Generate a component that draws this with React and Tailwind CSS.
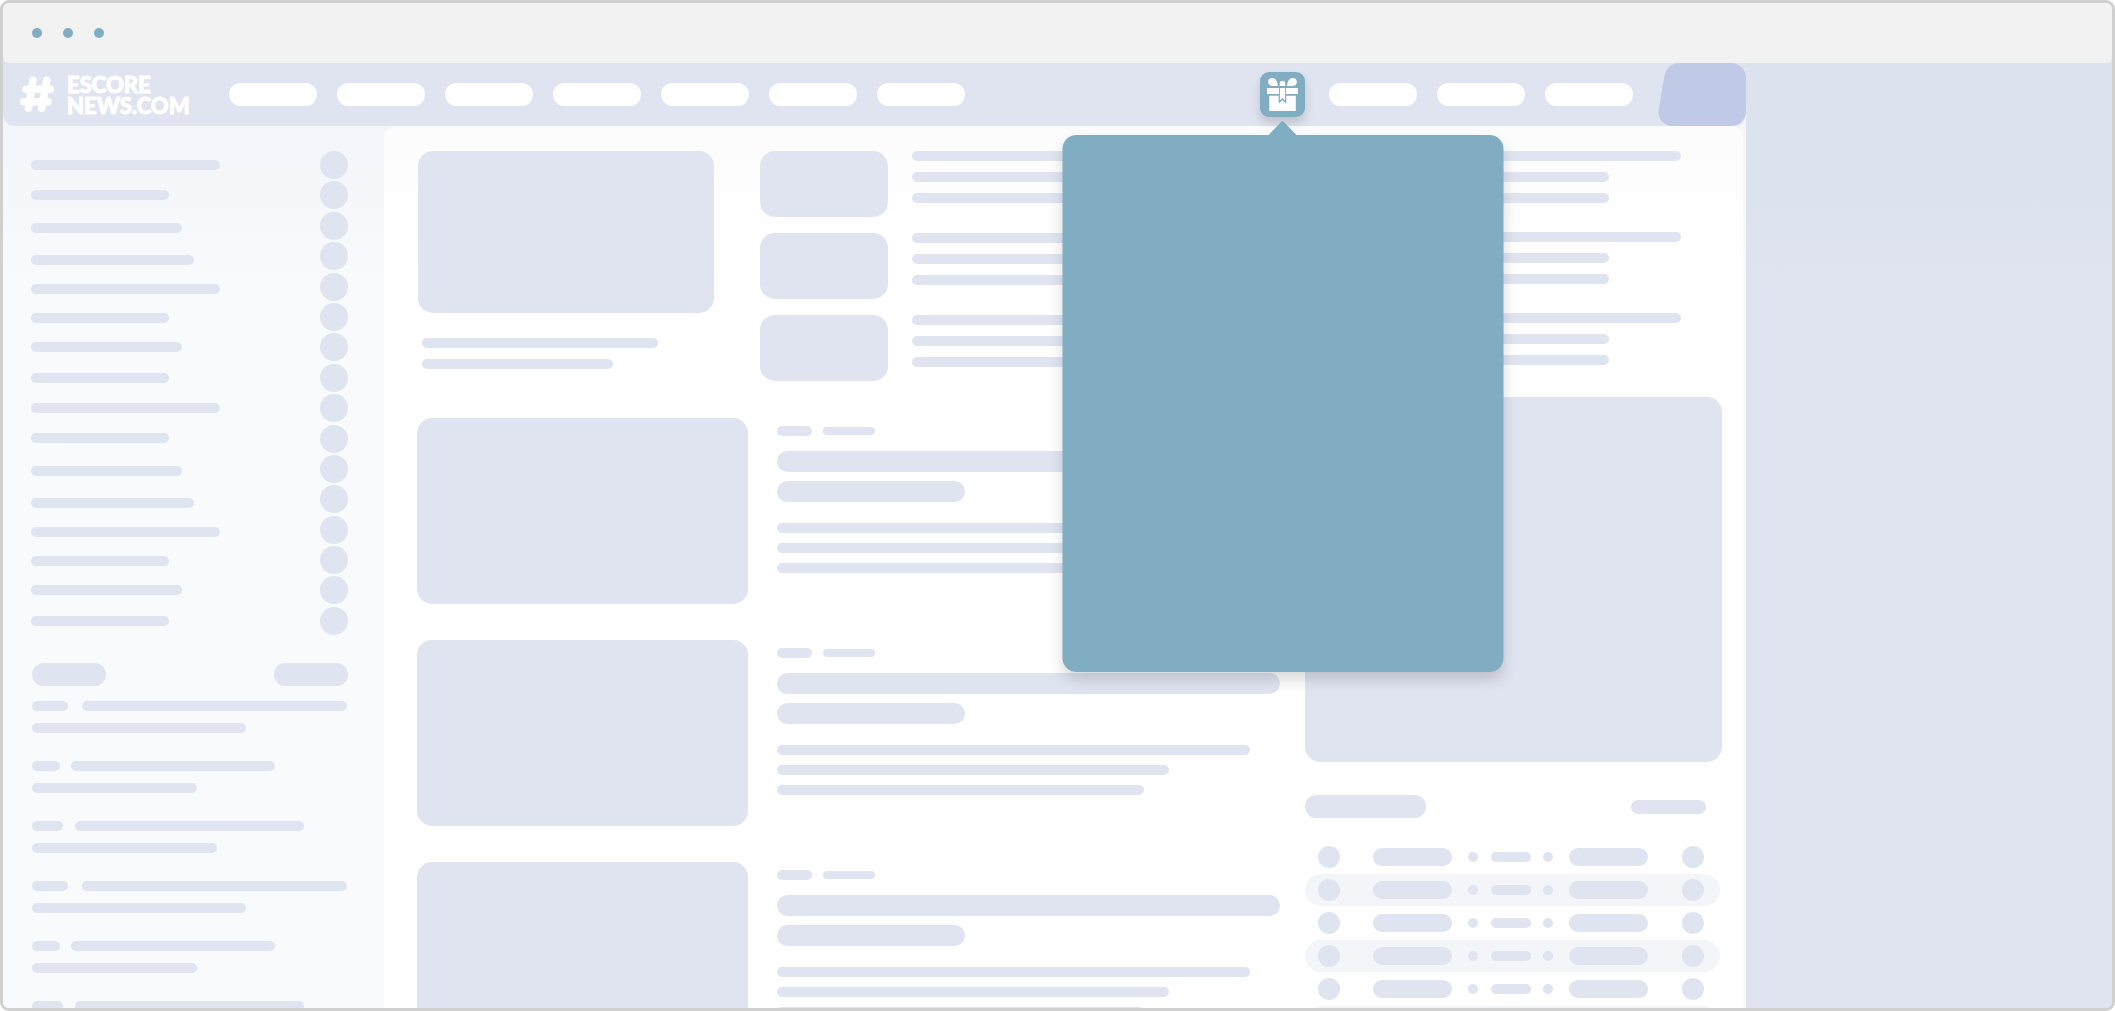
import React from "react";

const tone = "bg-[#e0e4f1]";

function Bar({ className = "" }) {
  return <div className={`h-[10px] shrink-0 rounded-full ${tone} ${className}`} />;
}

function HashIcon() {
  return (
    <svg width="35" height="37" viewBox="0 0 35 37" fill="none" stroke="#fff" strokeWidth="7.5" strokeLinecap="round" aria-hidden="true">
      <path d="M13 4.2 8.4 32.2M26.8 4.2 21.8 32.2M6 13.3H30.4M3.9 25.8H28" />
    </svg>
  );
}

function GiftIcon() {
  return (
    <svg className="size-full" viewBox="0 0 45 45" aria-hidden="true">
      <g fill="#fff">
        <path d="M8.2 10.2C8 7.400 10 6 12.300 6.100C15.500 6.300 17.600 9 17.800 13.900H12.500C9.800 13.900 8.300 12.400 8.200 10.200Z" />
        <path d="M36.800 10.200C37 7.400 35 6 32.700 6.100C29.500 6.300 27.400 9 27.200 13.900H32.500C35.200 13.900 36.700 12.400 36.800 10.200Z" />
        <path d="M19.700 14V11.400C19.700 9.800 20.900 8.700 22.500 8.700S25.300 9.800 25.300 11.400V14Z" />
        <path d="M7 16H19V22H7ZM26 16H38V22H26Z" />
        <path d="M9.300 23.700H18.700V31.600L22.500 28.200L26.300 31.600V23.700H35.800V39H9.300Z" />
        <path d="M19.900 16H25.100V28.500L22.500 26L19.900 28.500Z" />
      </g>
    </svg>
  );
}

function NavPills({ items }) {
  return items.map((name) => (
    <a key={name} href="#" aria-label={name} className="h-[23px] w-[88px] rounded-full bg-white" />
  ));
}

function Header() {
  return (
    <header className="flex h-[63px] items-center rounded-b-xl bg-[#e0e4f1] pl-[17px]">
      <a href="#" className="flex items-center gap-3 text-white">
        <HashIcon />
        <span className="w-[124px] font-['Lato',sans-serif] text-[22px] leading-[21px] font-black [-webkit-text-stroke:1px_white] [stroke-linejoin:round]">
          ESCORE
          <br />
          NEWS.COM
        </span>
      </a>
      <nav aria-label="Sections" className="ml-[38px] flex gap-5">
        <NavPills items={["News", "Matches", "Teams", "Players", "Events", "Ranking", "Articles"]} />
      </nav>
      <div className="relative ml-auto h-[45px]">
        <button type="button" aria-label="Gifts" className="block size-[45px] rounded-[9px] bg-[#80adc2] shadow-[0_6px_10px_rgba(0,0,0,0.15)]">
          <GiftIcon />
        </button>
        <GiftPopover />
      </div>
      <nav aria-label="Account" className="ml-6 flex gap-5">
        <NavPills items={["Language", "Search", "Settings"]} />
      </nav>
      <button type="button" aria-label="Sign in" className="ml-[25px] h-[63px] w-[88px]">
        <svg className="size-full" viewBox="0 0 88 63" preserveAspectRatio="none" aria-hidden="true">
          <path d="M21 0H73C81.500 0 88 6.500 88 15V48C88 56.500 81.500 63 73 63H15C6 63 -0.600 56 0.500 47.500L6.500 13C8 5 13.500 0 21 0Z" fill="#c0c9e5" />
        </svg>
      </button>
    </header>
  );
}

function GiftPopover() {
  return (
    <div role="dialog" aria-label="Gifts" className="absolute top-[63px] left-1/2 z-10 h-[537px] w-[441px] -translate-x-1/2 rounded-[14px] bg-[#80adc2] shadow-[0_8px_14px_rgba(0,0,0,0.15)]">
      <svg className="absolute bottom-full left-1/2 -translate-x-1/2" width="28" height="14" viewBox="0 0 28 14" aria-hidden="true">
        <path d="M0 14 12.600 1Q14 -0.300 15.400 1L28 14Z" fill="#80adc2" />
      </svg>
    </div>
  );
}

const rankBars = [
  "w-[189px]",
  "mt-5 w-[138px]",
  "mt-[23px] w-[151px]",
  "mt-[22px] w-[163px]",
  "mt-[19px] w-[189px]",
  "mt-[19px] w-[138px]",
  "mt-[19px] w-[151px]",
  "mt-[21px] w-[138px]",
  "mt-5 w-[189px]",
  "mt-5 w-[138px]",
  "mt-[23px] w-[151px]",
  "mt-[22px] w-[163px]",
  "mt-[19px] w-[189px]",
  "mt-[19px] w-[138px]",
  "mt-[19px] w-[151px]",
  "mt-[21px] w-[138px]",
];

const feed = [
  { gap: "gap-[14px]", tag: "w-9", line: "w-[265px]", second: "w-[214px]" },
  { gap: "gap-[11px]", tag: "w-7", line: "w-[204px]", second: "w-[165px]" },
  { gap: "gap-3", tag: "w-[31px]", line: "w-[229px]", second: "w-[185px]" },
];

function Sidebar() {
  return (
    <aside className="w-[381px] shrink-0 pt-[25px] pr-9 pl-7">
      <div className="flex justify-between">
        <div className="flex flex-col pt-[9px]">
          {rankBars.map((c, i) => (
            <Bar key={i} className={c} />
          ))}
        </div>
        <div className="flex h-[484px] flex-col justify-between">
          {rankBars.map((_, i) => (
            <div key={i} className={`size-7 rounded-full ${tone}`} />
          ))}
        </div>
      </div>
      <div className="mt-7 flex justify-between pl-px">
        <div className={`h-[23px] w-[74px] rounded-full ${tone}`} />
        <div className={`h-[23px] w-[74px] rounded-full ${tone}`} />
      </div>
      <div className="mt-[15px] flex flex-col gap-7 pl-px">
        {[...feed, ...feed].map((f, i) => (
          <div key={i} className="flex flex-col gap-3">
            <div className={`flex ${f.gap}`}>
              <Bar className={f.tag} />
              <Bar className={f.line} />
            </div>
            <Bar className={f.second} />
          </div>
        ))}
      </div>
    </aside>
  );
}

function Featured() {
  return (
    <section className="flex">
      <div className="w-[297px] shrink-0 pl-px">
        <div className={`h-[162px] rounded-[15px] ${tone}`} />
        <Bar className="mt-[25px] ml-1 w-[236px]" />
        <Bar className="mt-[11px] ml-1 w-[191px]" />
      </div>
      <div className="ml-[46px] flex flex-1 flex-col gap-4">
        {[0, 1, 2].map((i) => (
          <div key={i} className="flex gap-6">
            <div className={`h-[66px] w-32 shrink-0 rounded-[15px] ${tone}`} />
            <div className="flex flex-1 flex-col gap-[11px]">
              <Bar className="w-11/12" />
              <Bar className="w-3/4" />
              <Bar className="w-3/4" />
            </div>
          </div>
        ))}
      </div>
    </section>
  );
}

function Article() {
  return (
    <article className="flex gap-[29px]">
      <div className={`h-[186px] w-[331px] shrink-0 rounded-[15px] ${tone}`} />
      <div className="flex-1 pt-2">
        <div className="flex items-center gap-[11px]">
          <Bar className="w-[35px]" />
          <div className={`h-2 w-[52px] rounded-full ${tone}`} />
        </div>
        <div className={`mt-[15px] h-[21px] rounded-full ${tone}`} />
        <div className={`mt-[9px] h-[21px] w-[188px] rounded-full ${tone}`} />
        <div className="mt-[21px] flex flex-col gap-[10px]">
          <Bar className="w-[94%]" />
          <Bar className="w-[78%]" />
          <Bar className="w-[73%]" />
        </div>
      </div>
    </article>
  );
}

function MatchRow({ striped }) {
  return (
    <div className={`mr-[2px] flex h-8 items-center rounded-full pr-4 pl-[13px] ${striped ? "bg-[#f4f5f9]" : ""}`}>
      <div className={`size-[22px] rounded-full ${tone}`} />
      <div className={`ml-[33px] h-[18px] w-[79px] rounded-full ${tone}`} />
      <Bar className="ml-4 w-[10px]" />
      <Bar className="ml-[13px] w-10" />
      <Bar className="ml-3 w-[10px]" />
      <div className={`ml-4 h-[18px] w-[79px] rounded-full ${tone}`} />
      <div className={`ml-auto size-[22px] rounded-full ${tone}`} />
    </div>
  );
}

function RightColumn() {
  return (
    <div className="w-[417px] shrink-0">
      <div className="flex flex-col gap-[29px]">
        {[0, 1, 2].map((i) => (
          <div key={i} className="flex flex-col gap-[11px]">
            <Bar className="w-[376px]" />
            <Bar className="w-[304px]" />
            <Bar className="w-[304px]" />
          </div>
        ))}
      </div>
      <div className={`mt-8 h-[365px] rounded-[15px] ${tone}`} />
      <div className="mt-[33px] flex items-center justify-between pr-4">
        <div className={`h-[23px] w-[121px] rounded-full ${tone}`} />
        <div className={`h-[14px] w-[75px] rounded-full ${tone}`} />
      </div>
      <div className="mt-[23px] flex flex-col gap-px">
        {[0, 1, 2, 3, 4, 5].map((i) => (
          <MatchRow key={i} striped={i % 2 === 1} />
        ))}
      </div>
    </div>
  );
}

export default function App() {
  return (
    <div className="flex h-screen flex-col overflow-hidden rounded-[9px] border-[3px] border-[#d0d0d0] bg-[#e0e4f1]">
      <div className="flex h-[60px] shrink-0 items-center gap-[21px] rounded-b-md bg-[#f2f2f2] pl-[29px]">
        <span className="size-[10px] rounded-full bg-[#80adc2]" />
        <span className="size-[10px] rounded-full bg-[#80adc2]" />
        <span className="size-[10px] rounded-full bg-[#80adc2]" />
      </div>
      <div className="flex min-h-0 flex-1">
        <div className="min-w-0 flex-1 bg-[#f8fafc] bg-[linear-gradient(to_bottom,#f4f5fa_60px,#f8fafc_220px)]">
          <Header />
          <div className="flex pr-[3px]">
            <Sidebar />
            <main className="flex min-w-0 flex-1 gap-[25px] rounded-t-xl bg-[linear-gradient(to_bottom,#fcfcfc,#ffffff_150px)] pt-[25px] pr-[21px] pl-[33px]">
              <div className="min-w-0 flex-1">
                <Featured />
                <div className="mt-[37px] flex flex-col gap-9">
                  <Article />
                  <Article />
                  <Article />
                </div>
              </div>
              <RightColumn />
            </main>
          </div>
        </div>
        <div className="w-[366px] shrink-0 bg-[linear-gradient(to_bottom,#dde2ef,#dde2ef_120px,#e0e4f1_220px)]" />
      </div>
    </div>
  );
}
